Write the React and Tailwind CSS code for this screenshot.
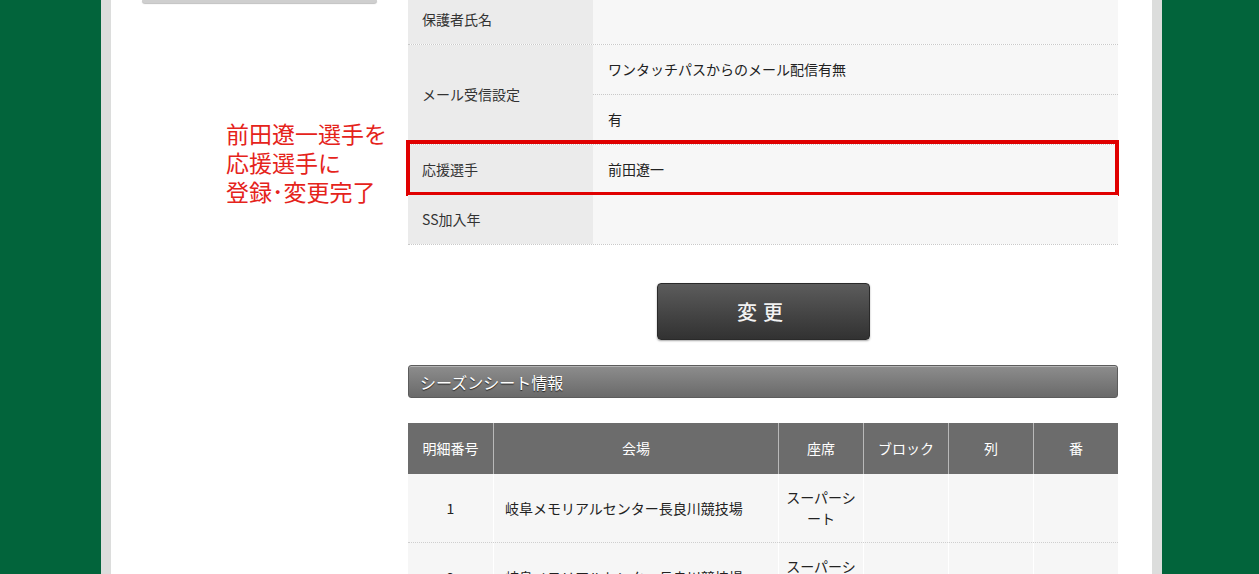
const font = "font-['Noto_Sans_CJK_JP','Noto_Sans',sans-serif]";

function InfoRow({ label, children, className = "" }) {
  return (
    <div className={`relative flex h-[50px] border-b border-dotted border-[#c9c9c9] ${className}`}>
      <div className="flex w-[185px] items-center bg-[#ebebeb] pl-[14px] text-[14px] text-[#333]">{label}</div>
      <div className="flex flex-1 items-center bg-[#f7f7f7] pl-[15px] text-[14px] text-[#222]">{children}</div>
    </div>
  );
}

const columns = [
  { title: "明細番号", w: "w-[85px]" },
  { title: "会場", w: "w-[285px]" },
  { title: "座席", w: "w-[85px]" },
  { title: "ブロック", w: "w-[85px]" },
  { title: "列", w: "w-[85px]" },
  { title: "番", w: "w-[85px]" },
];

const seats = [
  { no: "1", venue: "岐阜メモリアルセンター長良川競技場", seat: "スーパーシート" },
  { no: "2", venue: "岐阜メモリアルセンター長良川競技場", seat: "スーパーシート" },
];

function SeatRow({ no, venue, seat }) {
  return (
    <div className="flex h-[69px] border-b border-dotted border-[#cfcfcf] bg-[#f6f6f6] text-[14px] text-[#222]">
      <div className="flex w-[85px] items-center justify-center">{no}</div>
      <div className="flex w-[285px] items-center border-l border-white pl-[11px]">{venue}</div>
      <div className="flex w-[85px] items-center justify-center border-l border-white px-[5px] text-center leading-[21px]">{seat}</div>
      <div className="w-[85px] border-l border-white" />
      <div className="w-[85px] border-l border-white" />
      <div className="w-[85px] border-l border-white" />
    </div>
  );
}

export default function App() {
  return (
    <div className={`flex h-[574px] w-[1259px] overflow-hidden bg-[#02643b] ${font}`}>
      <div className="w-[101px] shrink-0" />
      <div className="w-[10px] shrink-0 bg-[#dcdddc]" />

      <div className="flex w-[1041px] shrink-0 bg-white">
        {/* sidebar */}
        <div className="w-[297px] shrink-0">
          <div className="ml-[31px] h-[3px] w-[235px] rounded-b-[3px] bg-[#cfcfcf] shadow-[0_1px_1px_rgba(0,0,0,0.25)]" />
          <div className="ml-[115px] mt-[116px] text-[23px] leading-[29px] text-[#e5231b]">
            <p>前田遼一選手を</p>
            <p>応援選手に</p>
            <p>登録･変更完了</p>
          </div>
        </div>

        {/* main content */}
        <div className="-mt-[5px] w-[710px] shrink-0">
          <InfoRow label="保護者氏名" />

          <div className="flex h-[100px] border-b border-dotted border-[#c9c9c9]">
            <div className="flex w-[185px] items-center bg-[#ebebeb] pl-[14px] text-[14px] text-[#333]">メール受信設定</div>
            <div className="flex flex-1 flex-col bg-[#f7f7f7] text-[14px] text-[#222]">
              <div className="flex h-[50px] items-center border-b border-dotted border-[#c9c9c9] pl-[15px]">ワンタッチパスからのメール配信有無</div>
              <div className="flex flex-1 items-center pl-[15px]">有</div>
            </div>
          </div>

          <InfoRow label="応援選手">
            前田遼一
            <div className="pointer-events-none absolute -bottom-[2px] -left-[2px] -right-[1px] -top-[5px] border-[4px] border-[#e00000]" />
          </InfoRow>

          <InfoRow label="SS加入年" />

          <div className="mt-[38px] flex justify-center">
            <button className="flex h-[57px] w-[213px] items-center justify-center rounded-[4px] border border-[#2a2a2a] bg-gradient-to-b from-[#5c5c5c] to-[#323232] text-[20px] font-medium tracking-[6px] text-[#f2f2f2] shadow-[0_1px_2px_rgba(0,0,0,0.35)]">
              変更
            </button>
          </div>

          <div className="mt-[25px] flex h-[33px] items-center rounded-[3px] border border-[#5c5c5c] bg-gradient-to-b from-[#8d8d8d] to-[#6a6a6a] pl-[11px] text-[16px] text-white shadow-[inset_0_1px_0_rgba(255,255,255,0.35)] [text-shadow:0_1px_1px_rgba(0,0,0,0.7)]">
            シーズンシート情報
          </div>

          <div className="mt-[25px]">
            <div className="flex h-[51px] bg-[#6c6c6c] text-[14px] text-white">
              {columns.map((c, i) => (
                <div
                  key={c.title}
                  className={`flex ${c.w} items-center justify-center ${i > 0 ? "border-l border-[#b9b9b9]" : ""}`}
                >
                  {c.title}
                </div>
              ))}
            </div>
            {seats.map((s) => (
              <SeatRow key={s.no} {...s} />
            ))}
          </div>
        </div>
      </div>

      <div className="w-[10px] shrink-0 bg-[#dcdddc]" />
      <div className="flex-1" />
    </div>
  );
}
